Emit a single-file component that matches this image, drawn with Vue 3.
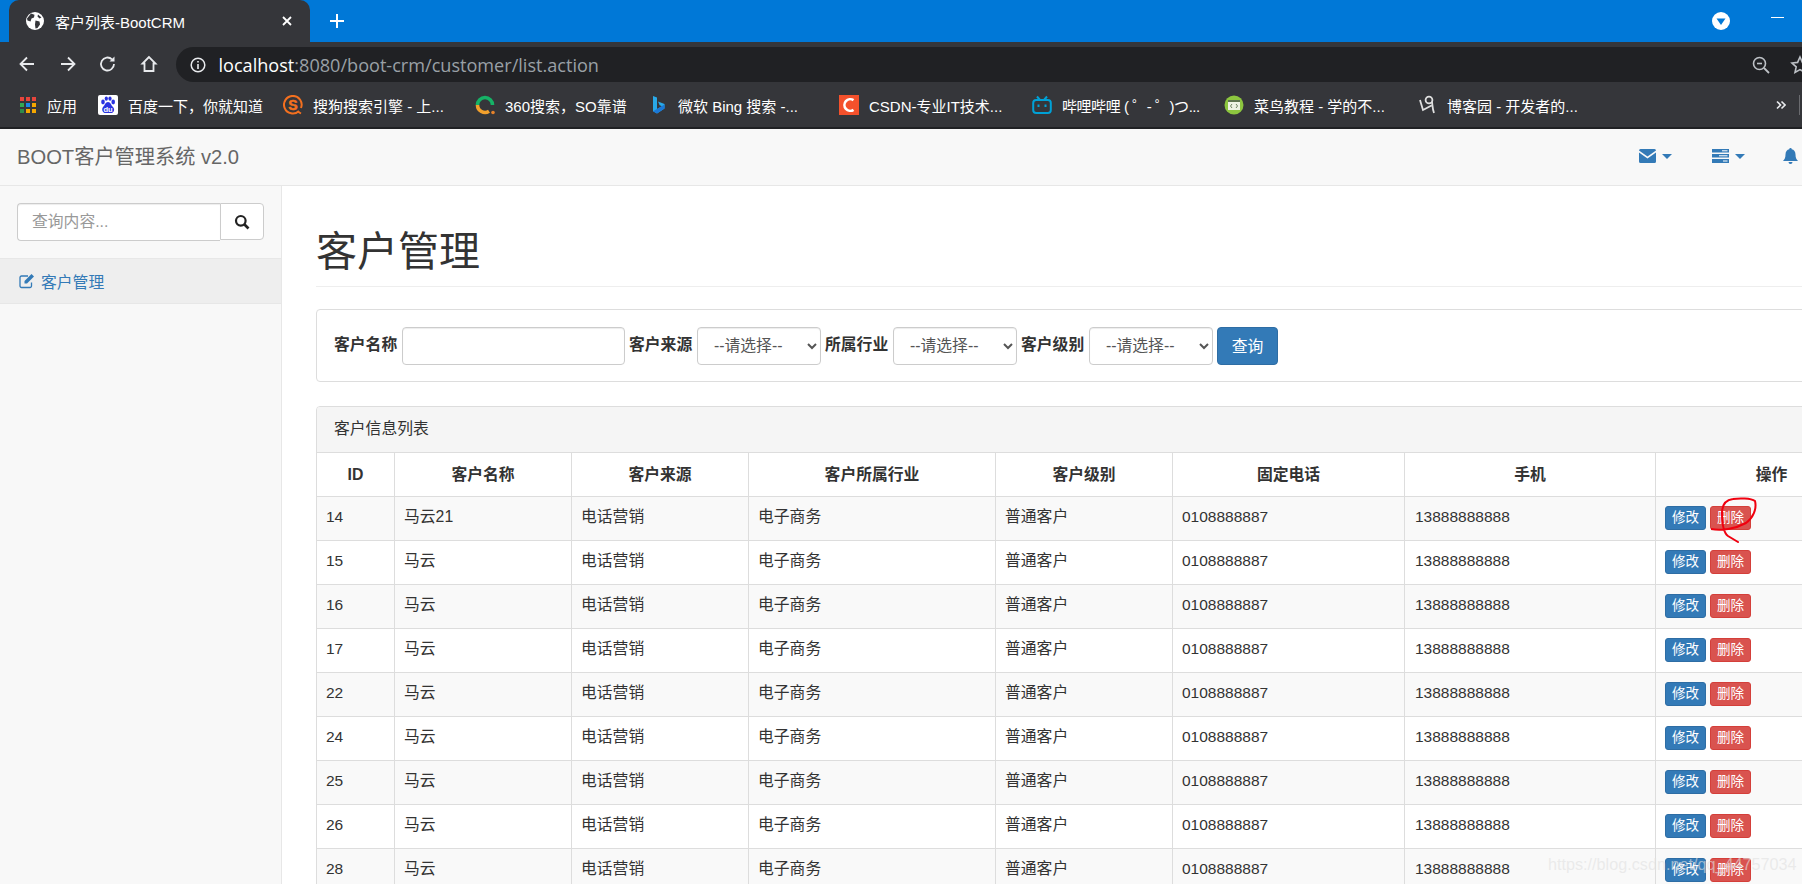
<script setup>
const bookmarks = [
  { key: 'baidu', text: '百度一下\uFF0C你就知道', w: 185 },
  { key: 'sogou', text: '搜狗搜索引擎 - 上...', w: 192 },
  { key: 'so360', text: '360搜索\uFF0CSO靠谱', w: 173 },
  { key: 'bing', text: '微软 Bing 搜索 -...', w: 191 },
  { key: 'csdn', text: 'CSDN-专业IT技术...', w: 193 },
  { key: 'bili', text: '哔哩哔哩 ( ゜- ゜)つ...', w: 192 },
  { key: 'runoob', text: '菜鸟教程 - 学的不...', w: 193 },
  { key: 'cnblogs', text: '博客园 - 开发者的...', w: 170 }
]
const columns = [
  { name: 'ID', w: 78 }, { name: '客户名称', w: 177 }, { name: '客户来源', w: 177 },
  { name: '客户所属行业', w: 247 }, { name: '客户级别', w: 177 }, { name: '固定电话', w: 232 },
  { name: '手机', w: 251 }, { name: '操作', w: 232 }
]
const rows = [14, 15, 16, 17, 22, 24, 25, 26, 28].map((id, i) => ({ id, name: i === 0 ? '马云21' : '马云' }))
const filters = ['客户来源', '所属行业', '客户级别']
</script>

<template>
  <div class="screen">
    <div class="tabstrip">
      <div class="tab">
        <svg class="tab-globe" viewBox="0 0 20 20" width="20" height="20">
          <circle cx="10" cy="10" r="9" fill="#fff" />
          <path d="M6 2.6 9.5 3.8 9 6.5 6.5 7.5 5.5 10.5 2.5 9.5 2 7.5ZM10.5 9.5 14.5 10.5 15 13.5 12.5 17 10.5 17.5 10 13.5ZM13 3.5 16.5 6.5 14.5 7.5 12.5 5.5Z" fill="#35363a" />
        </svg>
        <span class="tab-title">客户列表-BootCRM</span>
        <svg class="tab-close" viewBox="0 0 12 12" width="12" height="12">
          <path d="M2 2 10 10M10 2 2 10" stroke="#fff" stroke-width="1.8" />
        </svg>
      </div>
      <svg class="tab-plus" viewBox="0 0 16 16" width="16" height="16">
        <path d="M8 1V15M1 8H15" stroke="#fff" stroke-width="2" />
      </svg>
      <svg class="profile" viewBox="0 0 18 18" width="18" height="18">
        <circle cx="9" cy="9" r="9" fill="#fff" />
        <path d="M4.5 6.5H13.5L9 13Z" fill="#0078d7" />
      </svg>
      <span class="minimize"></span>
    </div>

    <div class="toolbar">
      <svg class="nav-icon" viewBox="0 0 20 20" width="20" height="20"><path d="M17 10H4M10 3.5 3.5 10 10 16.5" fill="none" stroke="#e8eaed" stroke-width="1.8" /></svg>
      <svg class="nav-icon" viewBox="0 0 20 20" width="20" height="20"><path d="M3 10H16M10 3.5 16.5 10 10 16.5" fill="none" stroke="#e8eaed" stroke-width="1.8" /></svg>
      <svg class="nav-icon" viewBox="0 0 20 20" width="20" height="20"><path d="M16 10A6.5 6.5 0 1 1 14 5.3" fill="none" stroke="#e8eaed" stroke-width="1.8" /><path d="M16.5 2.5V7.5H11.5Z" fill="#e8eaed" /></svg>
      <svg class="nav-icon" viewBox="0 0 20 20" width="20" height="20"><path d="M10 3 3.5 9.5H5.5V17H14.5V9.5H16.5Z" fill="none" stroke="#e8eaed" stroke-width="1.8" /></svg>
      <div class="omnibox">
        <svg class="info" viewBox="0 0 16 16" width="16" height="16"><circle cx="8" cy="8" r="6.8" fill="none" stroke="#e8eaed" stroke-width="1.5" /><path d="M8 7V12M8 4V5.6" stroke="#e8eaed" stroke-width="1.6" /></svg>
        <span class="url"><span class="host">localhost</span>:8080/boot-crm/customer/list.action</span>
        <svg class="zoom-out" viewBox="0 0 18 18" width="18" height="18"><circle cx="7.5" cy="7.5" r="6" fill="none" stroke="#bdc1c6" stroke-width="1.6" /><path d="M12 12 17 17" stroke="#bdc1c6" stroke-width="1.8" /><path d="M5 7.5H10" stroke="#bdc1c6" stroke-width="1.6" /></svg>
        <svg class="star" viewBox="0 0 20 20" width="20" height="20"><path d="M10 2 12.4 7.4 18 8 13.8 11.8 15 17.5 10 14.6 5 17.5 6.2 11.8 2 8 7.6 7.4Z" fill="none" stroke="#bdc1c6" stroke-width="1.6" /></svg>
      </div>
    </div>

    <div class="bookmarks">
      <div class="mark apps">
        <svg viewBox="0 0 16 16" width="16" height="16" class="mark-icon">
          <rect x="0" y="0" width="4" height="4" fill="#e8453c" /><rect x="6" y="0" width="4" height="4" fill="#e8453c" /><rect x="12" y="0" width="4" height="4" fill="#e8453c" />
          <rect x="0" y="6" width="4" height="4" fill="#34a853" /><rect x="6" y="6" width="4" height="4" fill="#1a88e8" /><rect x="12" y="6" width="4" height="4" fill="#f5a700" />
          <rect x="0" y="12" width="4" height="4" fill="#2e8b4a" /><rect x="6" y="12" width="4" height="4" fill="#f5a700" /><rect x="12" y="12" width="4" height="4" fill="#f5a700" />
        </svg>
        <span>应用</span>
      </div>
      <div v-for="b in bookmarks" :key="b.key" class="mark" :class="b.key" :style="{ width: b.w + 'px' }">
        <svg v-if="b.key === 'baidu'" viewBox="0 0 20 20" width="20" height="20" class="mark-icon">
          <rect width="20" height="20" rx="2" fill="#fff" />
          <ellipse cx="5" cy="7" rx="1.8" ry="2.4" fill="#2932e1" /><ellipse cx="8.3" cy="3.6" rx="1.6" ry="2.2" fill="#2932e1" /><ellipse cx="12" cy="3.6" rx="1.6" ry="2.2" fill="#2932e1" /><ellipse cx="15.2" cy="7" rx="1.8" ry="2.4" fill="#2932e1" />
          <path d="M10 7C7.5 7 7 10 5 12 3 14.5 5 18.5 8 18H12.5C15.5 18.5 17.5 14.5 15 12 13 10 12.5 7 10 7Z" fill="#2932e1" />
          <text x="10" y="16.5" text-anchor="middle" class="du">du</text>
        </svg>
        <svg v-else-if="b.key === 'sogou'" viewBox="0 0 20 20" width="20" height="20" class="mark-icon">
          <path d="M16 16A8.8 8.8 0 1 1 18 13" fill="none" stroke="#f4701f" stroke-width="2" />
          <path d="M14.5 16.5 18 18.5" stroke="#f4701f" stroke-width="2" />
          <text x="10" y="15" text-anchor="middle" class="sg">S</text>
        </svg>
        <svg v-else-if="b.key === 'so360'" viewBox="0 0 20 20" width="20" height="20" class="mark-icon">
          <path d="M2.5 10A7.5 7.5 0 0 1 17.5 10" fill="none" stroke="#16b266" stroke-width="3.6" />
          <path d="M2.5 10A7.5 7.5 0 0 0 14 16.3" fill="none" stroke="#f2a02c" stroke-width="3.6" />
          <circle cx="18" cy="17.5" r="1.8" fill="#e5822a" />
        </svg>
        <svg v-else-if="b.key === 'bing'" viewBox="0 0 20 20" width="20" height="20" class="mark-icon">
          <path d="M5 1 9 2.6V14L14 11.3 11.6 10.2 10 6.5 16.5 9V13.5L9 18.5 5 16.2Z" fill="#29a9e8" />
          <path d="M9 14 16.5 9.5V13.5L9 18.5 5 16.2Z" fill="#1b78d8" />
        </svg>
        <svg v-else-if="b.key === 'csdn'" viewBox="0 0 20 20" width="20" height="20" class="mark-icon">
          <rect width="20" height="20" fill="#f4512c" />
          <path d="M14.5 5.2A5.8 5.8 0 1 0 14.5 14.8" fill="none" stroke="#fff" stroke-width="2.6" />
        </svg>
        <svg v-else-if="b.key === 'bili'" viewBox="0 0 20 20" width="20" height="20" class="mark-icon">
          <rect x="1.2" y="5" width="17.6" height="13" rx="3" fill="none" stroke="#00a1d6" stroke-width="2" />
          <path d="M5 1.5 8 5M15 1.5 12 5" stroke="#00a1d6" stroke-width="2" />
          <path d="M6.5 9.5V12M13.5 9.5V12" stroke="#00a1d6" stroke-width="2" />
        </svg>
        <svg v-else-if="b.key === 'runoob'" viewBox="0 0 20 20" width="20" height="20" class="mark-icon">
          <circle cx="10" cy="10" r="9.5" fill="#8dc63f" />
          <rect x="4" y="5" width="12" height="10" fill="#eef2e4" />
          <rect x="4" y="5" width="12" height="2" fill="#5f7350" />
          <path d="M8 9 6.5 11 8 13M12 9 13.5 11 12 13" fill="none" stroke="#5f7350" stroke-width=".9" />
        </svg>
        <svg v-else viewBox="0 0 20 20" width="20" height="20" class="mark-icon">
          <circle cx="12" cy="5" r="3.4" fill="none" stroke="#e0e0e0" stroke-width="1.8" />
          <path d="M15 7C15.5 10 15.5 14 17 18M3 5 6 15 14.5 10.5" fill="none" stroke="#e0e0e0" stroke-width="1.8" />
        </svg>
        <span>{{ b.text }}</span>
      </div>
      <svg class="more" viewBox="0 0 10 10" width="10" height="10"><path d="M1 1.5 4.5 5 1 8.5M5.5 1.5 9 5 5.5 8.5" fill="none" stroke="#e8eaed" stroke-width="1.6" /></svg>
      <span class="bm-sep"></span>
    </div>

    <nav class="navbar">
      <span class="brand">BOOT客户管理系统 v2.0</span>
      <div class="nav-right">
        <span class="nav-drop">
          <svg viewBox="0 0 17 14" width="17" height="14"><path d="M0 1.5A1.5 1.5 0 0 1 1.5 0H15.5A1.5 1.5 0 0 1 17 1.5L8.5 7.5 0 1.5ZM0 3.6V12.5A1.5 1.5 0 0 0 1.5 14H15.5A1.5 1.5 0 0 0 17 12.5V3.6L8.5 9.6Z" fill="#337ab7" /></svg>
          <i class="caret"></i>
        </span>
        <span class="nav-drop">
          <svg viewBox="0 0 17 14" width="17" height="14"><path d="M0 0H17V3.6H0ZM0 5H17V8.6H0ZM0 10H17V14H0Z" fill="#337ab7" /><path d="M10 1.8H15.5M7 6.8H15.5M11 12H15.5" stroke="#fff" stroke-width="1" /></svg>
          <i class="caret"></i>
        </span>
        <svg viewBox="0 0 15 16" width="15" height="16"><path d="M7.5 0A1.2 1.2 0 0 1 8.7 1.3C11 1.8 12.5 3.6 12.5 6.5 12.5 10 13.5 11.5 15 13H0C1.5 11.5 2.5 10 2.5 6.5 2.5 3.6 4 1.8 6.3 1.3A1.2 1.2 0 0 1 7.5 0ZM5.5 14H9.5A2 2 0 0 1 5.5 14Z" fill="#337ab7" /></svg>
      </div>
    </nav>

    <div class="body">
      <aside class="sidebar">
        <div class="side-search">
          <input class="side-input" placeholder="查询内容..." />
          <button class="side-btn">
            <svg viewBox="0 0 16 16" width="16" height="16"><circle cx="6.8" cy="6.8" r="4.8" fill="none" stroke="#222" stroke-width="2.2" /><path d="M10.5 10.5 14.5 14.5" stroke="#222" stroke-width="2.6" /></svg>
          </button>
        </div>
        <a class="side-item">
          <svg viewBox="0 0 16 16" width="16" height="16"><path d="M12.5 9.5V13A1.5 1.5 0 0 1 11 14.5H2.5A1.5 1.5 0 0 1 1 13V4.5A1.5 1.5 0 0 1 2.5 3H9" fill="none" stroke="#337ab7" stroke-width="1.3" /><path d="M5.5 8 12.5 1 15 3.5 8 10.5H5.5Z" fill="#337ab7" /></svg>
          <span>客户管理</span>
        </a>
      </aside>

      <main class="main">
        <h1 class="title">客户管理</h1>
        <form class="panel filter">
          <label class="lbl">客户名称</label>
          <input class="ctl name-input" />
          <template v-for="f in filters" :key="f">
            <label class="lbl">{{ f }}</label>
            <select class="ctl sel"><option>--请选择--</option></select>
          </template>
          <button type="button" class="query">查询</button>
        </form>

        <section class="panel list">
          <div class="panel-head">客户信息列表</div>
          <table class="tbl">
            <colgroup><col v-for="c in columns" :key="c.name" :style="{ width: c.w + 'px' }" /></colgroup>
            <thead><tr><th v-for="c in columns" :key="c.name">{{ c.name }}</th></tr></thead>
            <tbody>
              <tr v-for="r in rows" :key="r.id">
                <td class="num">{{ r.id }}</td>
                <td>{{ r.name }}</td>
                <td>电话营销</td>
                <td>电子商务</td>
                <td>普通客户</td>
                <td class="num">0108888887</td>
                <td class="num mobile">13888888888</td>
                <td class="ops"><span class="btn blue">修改</span><span class="btn red">删除</span></td>
              </tr>
            </tbody>
          </table>
        </section>
      </main>
    </div>

    <svg class="scribble" viewBox="0 -2 70 50" width="70" height="50">
      <path d="M0 30C10 32 24 30 35 24 42 19 46 10 44 2 40-1 28-1 22 0 14 1 11 6 11 14 11 24 13 34 17 37L27 43" fill="none" stroke="#f0000f" stroke-width="2" stroke-linecap="round" />
    </svg>
    <span class="watermark">https://blog.csdn.net/qq_44757034</span>
  </div>
</template>

<style>
html, body { margin: 0; overflow: hidden; background: #fff; }
</style>

<style scoped>
.screen {
  position: relative;
  width: 1802px;
  height: 884px;
  overflow: hidden;
  display: flex;
  flex-direction: column;
  font-family: "Liberation Sans", "Noto Sans CJK SC", sans-serif;
  font-size: 15.8px;
  color: #333;
  background: #fff;
}
.tabstrip {
  height: 42px;
  flex: none;
  background: #0078d7;
  display: flex;
  align-items: flex-end;
  padding-left: 9px;
  box-sizing: border-box;
}
.tab {
  width: 301px;
  height: 42px;
  background: #35363a;
  border-radius: 10px 10px 0 0;
  display: flex;
  align-items: center;
  padding: 0 17px 0 16px;
  box-sizing: border-box;
  color: #fff;
  font-size: 15px;
}
.tab-globe { margin-right: 10px; }
.tab-title { flex: 1; }
.tab-plus { margin: 0 0 13px 19px; }
.profile { margin: 0 0 12px 1367px; }
.minimize {
  width: 13px;
  height: 1px;
  background: #fff;
  margin: 0 0 24px 41px;
}
.toolbar {
  height: 41px;
  flex: none;
  background: #35363a;
  display: flex;
  align-items: flex-end;
  padding: 0 0 1px 17px;
  box-sizing: border-box;
}
.nav-icon { margin: 0 20.5px 8px 0; }
.nav-icon:nth-child(4) { margin-right: 17px; }
.omnibox {
  flex: 1;
  height: 35px;
  background: #202124;
  border-radius: 18px 0 0 18px;
  display: flex;
  align-items: center;
  padding-left: 14px;
}
.info { margin-right: 13px; }
.url {
  font-family: "Open Sans", "Liberation Sans", sans-serif;
  font-size: 18.1px;
  color: #9aa0a6;
  flex: 1;
}
.host { color: #fff; }
.zoom-out { margin-right: 20px; }
.star { margin-right: -8px; }
.bookmarks {
  height: 44px;
  flex: none;
  background: #35363a;
  border-bottom: 2px solid #202124;
  box-sizing: content-box;
  display: flex;
  align-items: center;
  padding: 0 0 0 20px;
  color: #fff;
  font-size: 15px;
  position: relative;
  white-space: nowrap;
}
.mark { display: flex; align-items: center; flex: none; box-sizing: border-box; }
.mark-icon { margin-right: 10px; flex: none; }
.apps { width: 78px; }
.apps .mark-icon { margin-right: 11px; }
.bili { letter-spacing: -0.45px; }
.du { font: bold 7.5px "Liberation Sans", sans-serif; fill: #fff; }
.sg { font: bold 14px "Liberation Sans", sans-serif; fill: #f4701f; stroke: #f4701f; stroke-width: .5px; }
.more { position: absolute; left: 1776px; top: 17px; }
.bm-sep { position: absolute; left: 1799px; top: 12px; width: 1px; height: 20px; background: #6a6b6f; }
.navbar {
  height: 56px;
  flex: none;
  box-sizing: content-box;
  background: #f8f8f8;
  border-bottom: 1px solid #e7e7e7;
  display: flex;
  align-items: center;
  padding: 0 4px 0 17px;
}
.brand { font-size: 20.2px; color: #666; margin-bottom: 4px; }
.nav-right { margin-left: auto; display: flex; align-items: center; margin-bottom: 2px; }
.nav-drop { display: flex; align-items: center; gap: 6px; margin-right: 40px; }
.nav-drop + .nav-drop { margin-right: 38px; }
.caret {
  width: 0;
  height: 0;
  border-top: 5px solid #337ab7;
  border-left: 5px solid transparent;
  border-right: 5px solid transparent;
}
.body { flex: 1; display: flex; min-height: 0; }
.sidebar {
  width: 281px;
  flex: none;
  background: #f8f8f8;
  border-right: 1px solid #e7e7e7;
  padding-top: 17px;
}
.side-search { display: flex; margin: 0 17px 17px 17px; height: 38px; }
.side-input {
  width: 203px;
  box-sizing: border-box;
  height: 38px;
  padding: 6px 14px;
  font: 15.8px "Liberation Sans", "Noto Sans CJK SC", sans-serif;
  border: 1px solid #ccc;
  border-right: none;
  border-radius: 4px 0 0 4px;
  background: #fff;
  box-shadow: inset 0 1px 1px rgba(0,0,0,.075);
  outline: none;
}
.side-input::placeholder { color: #999; }
.side-btn {
  width: 44px;
  height: 37px;
  border: 1px solid #ccc;
  border-radius: 0 4px 4px 0;
  background: #fff;
  padding: 0;
  display: flex;
  align-items: center;
  justify-content: center;
}
.side-item {
  display: flex;
  align-items: center;
  gap: 6px;
  height: 46px;
  padding-left: 19px;
  background: #eee;
  border-top: 1px solid #e7e7e7;
  border-bottom: 1px solid #e7e7e7;
  box-sizing: border-box;
  color: #337ab7;
}
.main { flex: none; width: 1600px; padding-left: 34px; box-sizing: border-box; }
.title {
  margin: 38px 0 22px;
  padding-bottom: 10px;
  border-bottom: 1px solid #eee;
  font-weight: 400;
  font-size: 41px;
  line-height: 56px;
  height: 52px;
  width: 1500px;
}
.panel {
  border: 1px solid #ddd;
  border-radius: 4px;
  background: #fff;
  width: 1571px;
  box-sizing: border-box;
}
.filter {
  height: 73px;
  display: flex;
  align-items: center;
  padding: 0 17px;
  gap: 4px;
}
.lbl { font-weight: 700; margin-bottom: 4px; width: 64px; white-space: nowrap; }
.ctl {
  height: 38px;
  box-sizing: border-box;
  border: 1px solid #ccc;
  border-radius: 4px;
  background: #fff;
  font: 15.8px "Liberation Sans", "Noto Sans CJK SC", sans-serif;
  color: #555;
  box-shadow: inset 0 1px 1px rgba(0,0,0,.075);
  outline: none;
}
.name-input { width: 223px; }
.sel { width: 124px; padding: 0 12px; }
.query {
  width: 61px;
  height: 38px;
  border: 1px solid #2e6da4;
  border-radius: 4px;
  background: #337ab7;
  color: #fff;
  font: 15.8px "Liberation Sans", "Noto Sans CJK SC", sans-serif;
  padding: 0;
}
.list { margin-top: 24px; }
.panel-head {
  height: 46px;
  line-height: 44px;
  padding-left: 17px;
  background: #f5f5f5;
  color: #333;
  border-bottom: 1px solid #ddd;
  box-sizing: border-box;
  border-radius: 3px 3px 0 0;
}
.tbl {
  border-collapse: collapse;
  table-layout: fixed;
  width: 1571px;
  margin-left: -1px;
}
.tbl th, .tbl td {
  border: 1px solid #ddd;
  box-sizing: border-box;
  padding: 0 9px;
  line-height: 22px;
  color: #333;
}
.tbl th { text-align: center; font-weight: 700; height: 43px; border-top: none; padding-top: 1px; }
.tbl td { height: 44px; padding-bottom: 3px; }
.tbl td.num { font-size: 15.5px; }
.tbl td.mobile { padding-left: 10px; }
.tbl tbody tr:nth-child(odd) { background: #f9f9f9; }
.ops { white-space: nowrap; }
.tbl td.ops { padding-bottom: 0; }
.btn {
  display: inline-block;
  width: 41px;
  height: 24px;
  line-height: 22px;
  box-sizing: border-box;
  border-radius: 3px;
  font-size: 13.5px;
  text-align: center;
  color: #fff;
  vertical-align: middle;
}
.blue { background: #337ab7; border: 1px solid #2e6da4; margin-right: 4px; }
.red { background: #d9534f; border: 1px solid #d43f3a; }
.scribble { position: absolute; left: 1711px; top: 497px; pointer-events: none; }
.watermark {
  position: absolute;
  left: 1548px;
  top: 855px;
  font-family: "Liberation Sans", sans-serif;
  font-size: 16.2px;
  color: rgba(225,225,225,.62);
  pointer-events: none;
  white-space: nowrap;
}
</style>
